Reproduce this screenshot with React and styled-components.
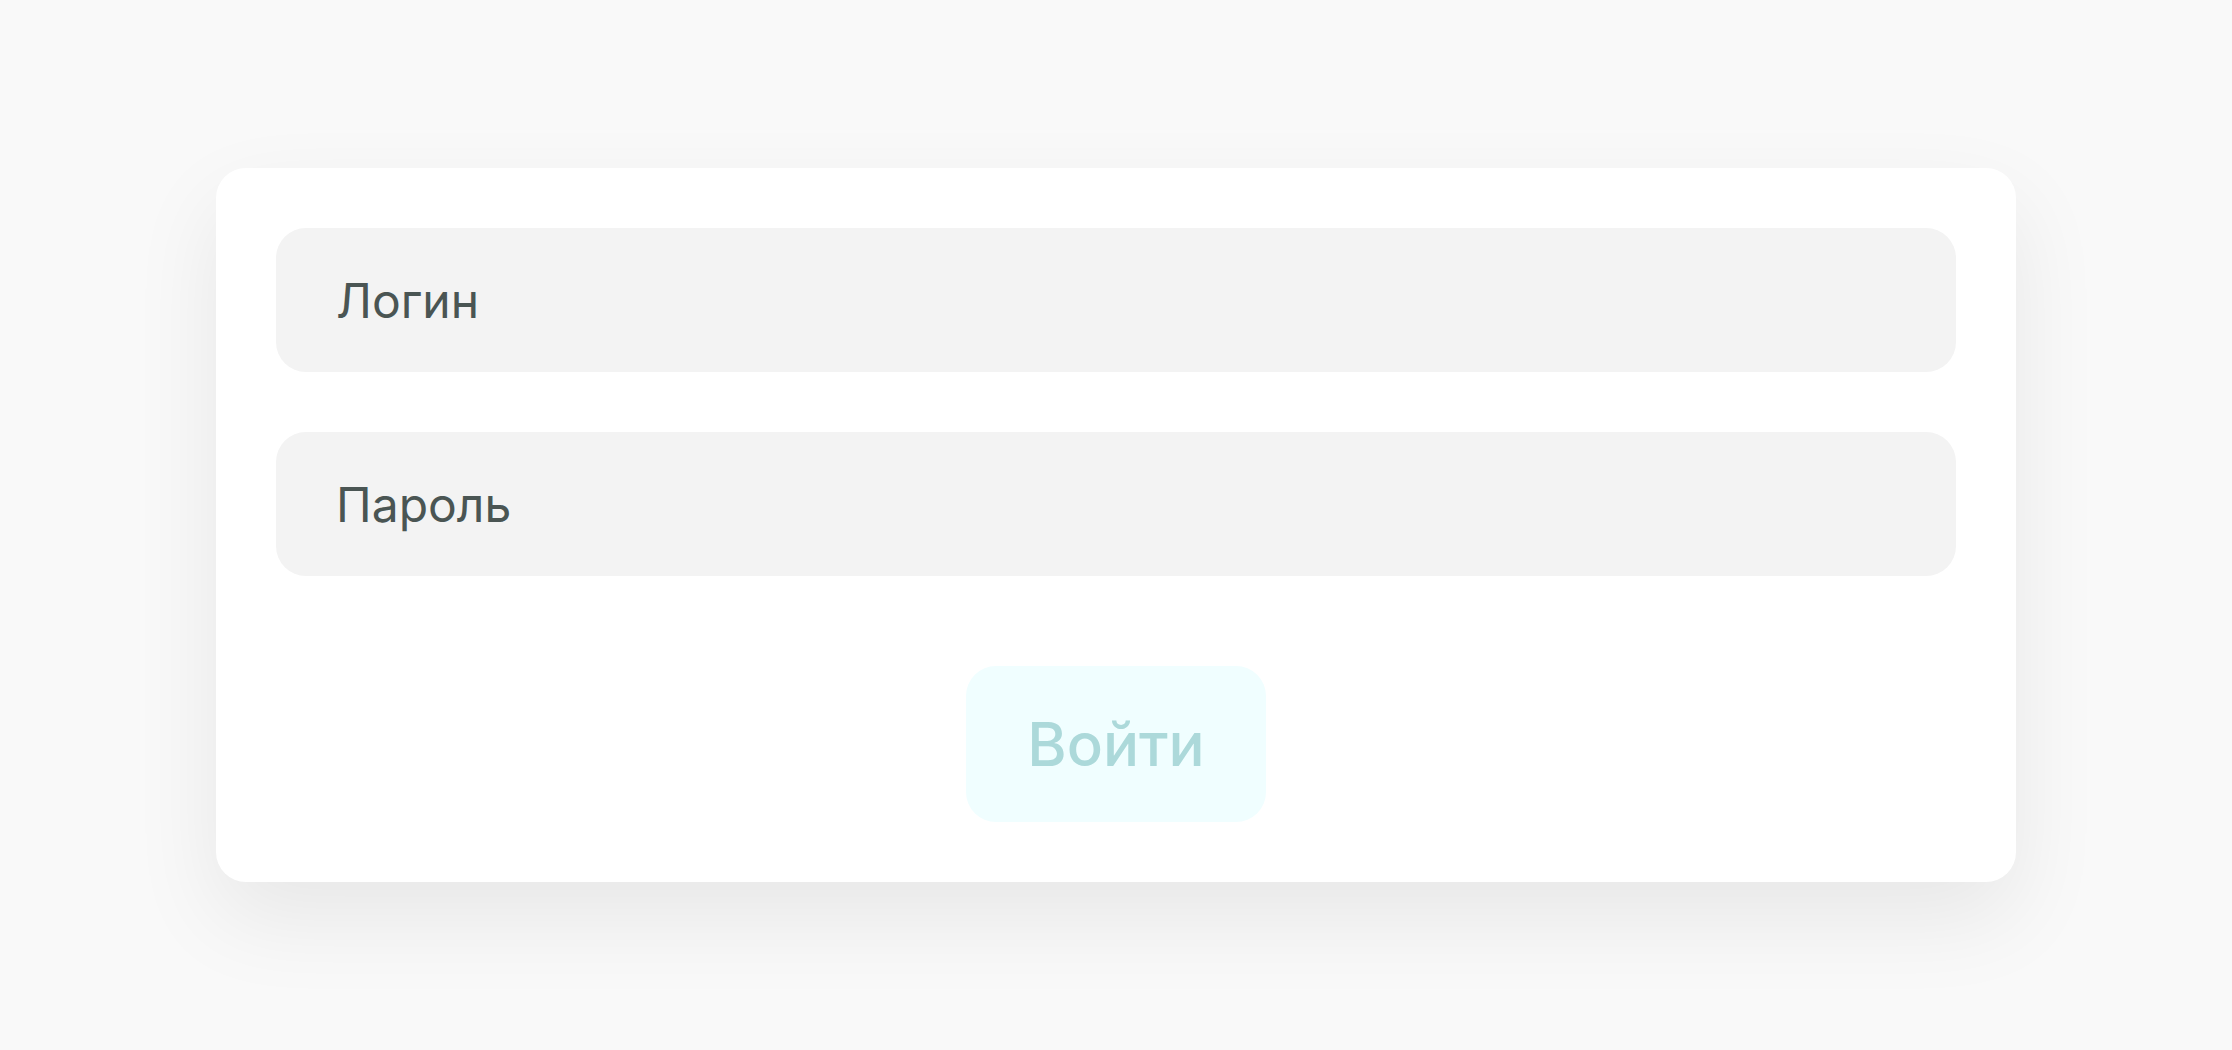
import React from "react";
import styled, { createGlobalStyle } from "styled-components";

const GlobalStyle = createGlobalStyle`
  html, body {
    margin: 0;
    padding: 0;
    height: 100%;
    background: #f9f9f9;
    font-family: Inter, "Noto Sans", sans-serif;
  }
  #root {
    height: 100%;
  }
`;

const Page = styled.div`
  min-height: 100vh;
  display: flex;
  align-items: center;
  justify-content: center;
`;

const Card = styled.form`
  width: 1800px;
  box-sizing: border-box;
  padding: 60px;
  background: #ffffff;
  border-radius: 30px;
  box-shadow: 0 36px 90px rgba(0, 0, 0, 0.075);
  display: flex;
  flex-direction: column;
  gap: 60px;
`;

const Field = styled.input`
  height: 144px;
  box-sizing: border-box;
  padding: 0 60px;
  border: none;
  outline: none;
  border-radius: 30px;
  background: #f3f3f3;
  font-family: Inter, "Noto Sans", sans-serif;
  font-size: 48px;
  color: #4a5553;

  &::placeholder {
    color: #4a5553;
    opacity: 1;
  }
`;

const Submit = styled.button`
  align-self: center;
  margin-top: 30px;
  width: 300px;
  height: 156px;
  border: none;
  border-radius: 30px;
  background: #f0feff;
  color: #acd9da;
  font-family: Inter, "Noto Sans", sans-serif;
  font-size: 60px;
  font-weight: 500;
  cursor: pointer;
`;

const App = () => {
  return (
    <Page>
      <GlobalStyle />
      <Card onSubmit={(e) => e.preventDefault()}>
        <Field type="text" placeholder="Логин" />
        <Field type="password" placeholder="Пароль" />
        <Submit type="submit">Войти</Submit>
      </Card>
    </Page>
  );
};

export default App;
